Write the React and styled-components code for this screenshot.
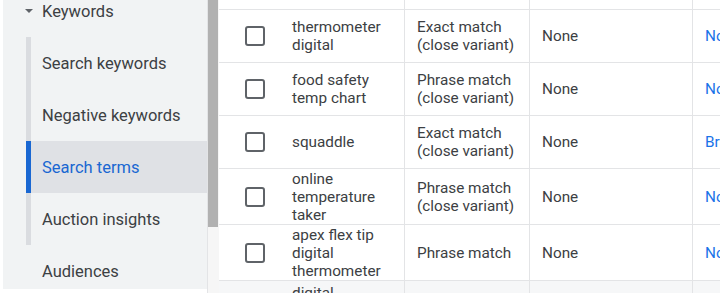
import React from "react";
import styled, { createGlobalStyle } from "styled-components";

const Global = createGlobalStyle`
  html, body { margin: 0; padding: 0; background: #ffffff; }
  body { font-family: Roboto, "Noto Sans", Arial, sans-serif; -webkit-font-smoothing: antialiased; }
  * { box-sizing: border-box; }
`;

const Page = styled.div`
  display: flex;
  align-items: stretch;
  width: 720px;
  height: 293px;
  padding-left: 3px;
  overflow: hidden;
  background: #ffffff;
`;

const Sidebar = styled.nav`
  flex: 0 0 204px;
  height: 289px;
  background: #f1f3f4;
  overflow: hidden;
  color: #3c4043;
  font-size: 16.5px;
`;

const NavList = styled.div`
  display: flex;
  flex-direction: column;
  margin-top: -15px;
`;

const GroupHeader = styled.div`
  display: flex;
  align-items: center;
  gap: 9px;
  height: 52px;
  padding-left: 22px;
`;

const Caret = styled.span`
  width: 0;
  height: 0;
  border-left: 4px solid transparent;
  border-right: 4px solid transparent;
  border-top: 4px solid #5f6368;
`;

const SubGroup = styled.div`
  display: flex;
  flex-direction: column;
  margin-left: 23px;
`;

const SubItem = styled.div`
  display: flex;
  align-items: center;
  height: 52px;
  padding-left: 11px;
  border-left: 5px solid ${(p) => (p.$active ? "#1967d2" : "#dadce0")};
  background: ${(p) => (p.$active ? "#dfe1e5" : "transparent")};
  color: ${(p) => (p.$active ? "#1967d2" : "#3c4043")};
`;

const TopItem = styled.div`
  display: flex;
  align-items: center;
  height: 52px;
  padding-left: 39px;
`;

const ScrollTrack = styled.div`
  flex: 0 0 12px;
  display: flex;
  flex-direction: column;
  padding-right: 1px;
  border-left: 1px solid #e3e4e6;
  background: #f6f6f6;
`;

const ScrollThumb = styled.div`
  height: 227px;
  background: #b1b1b1;
`;

const TableArea = styled.div`
  flex: 1 1 auto;
  min-width: 0;
  overflow: hidden;
  display: flex;
  flex-direction: column;
  color: #3c4043;
  font-size: 15.3px;
  line-height: 18px;
`;

const Row = styled.div`
  display: grid;
  grid-template-columns: 61px 124px 125px 163px 200px;
  min-height: ${(p) => (p.$header ? "10px" : "53px")};
  height: ${(p) => (p.$header ? "10px" : "auto")};
  border-bottom: 1px solid #e3e4e6;
  background: ${(p) => (p.$muted ? "#f6f7f8" : "#ffffff")};
  flex: 0 0 auto;
`;

const Cell = styled.div`
  display: flex;
  align-items: center;
  padding: 0.5px 12px;
  border-left: ${(p) => (p.$divider ? "1px solid #e3e4e6" : "none")};
  white-space: pre-line;
  color: ${(p) => (p.$link ? "#1a73e8" : "inherit")};
  overflow: hidden;
  ${(p) => (p.$top ? "align-items: flex-start; padding-top: 3px;" : "")}
`;

const CheckCell = styled.div`
  display: flex;
  align-items: center;
  padding-left: 26px;
`;

const Checkbox = styled.span`
  width: 20px;
  height: 20px;
  border: 2.5px solid #5f6368;
  border-radius: 3px;
  background: #ffffff;
`;

const rows = [
  { term: "thermometer\ndigital", match: "Exact match\n(close variant)", added: "None", group: "Non-brand" },
  { term: "food safety\ntemp chart", match: "Phrase match\n(close variant)", added: "None", group: "Non-brand" },
  { term: "squaddle", match: "Exact match\n(close variant)", added: "None", group: "Brand" },
  { term: "online\ntemperature\ntaker", match: "Phrase match\n(close variant)", added: "None", group: "Non-brand" },
  { term: "apex flex tip\ndigital\nthermometer", match: "Phrase match", added: "None", group: "Non-brand" },
];

export default function App() {
  return (
    <>
      <Global />
      <Page>
        <Sidebar>
          <NavList>
            <GroupHeader>
              <Caret />
              <span>Keywords</span>
            </GroupHeader>
            <SubGroup>
              <SubItem>Search keywords</SubItem>
              <SubItem>Negative keywords</SubItem>
              <SubItem $active>Search terms</SubItem>
              <SubItem>Auction insights</SubItem>
            </SubGroup>
            <TopItem>Audiences</TopItem>
          </NavList>
        </Sidebar>
        <ScrollTrack>
          <ScrollThumb />
        </ScrollTrack>
        <TableArea>
          <Row $header>
            <div />
            <div />
            <Cell $divider />
            <Cell $divider />
            <Cell $divider />
          </Row>
          {rows.map((r, i) => (
            <Row key={i}>
              <CheckCell>
                <Checkbox />
              </CheckCell>
              <Cell>{r.term}</Cell>
              <Cell $divider>{r.match}</Cell>
              <Cell $divider>{r.added}</Cell>
              <Cell $divider $link>{r.group}</Cell>
            </Row>
          ))}
          <Row $muted>
            <CheckCell />
            <Cell $top>{"digital\nthermometer\nprobe"}</Cell>
            <Cell $divider />
            <Cell $divider />
            <Cell $divider />
          </Row>
        </TableArea>
      </Page>
    </>
  );
}
